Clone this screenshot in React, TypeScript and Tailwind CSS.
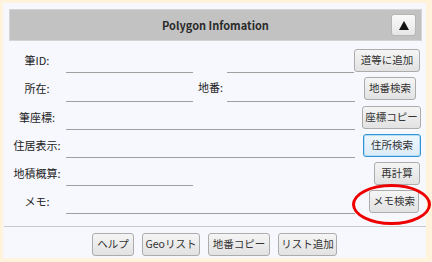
import React from "react";

const font = { fontFamily: '"Noto Sans CJK JP", "Noto Sans", sans-serif' };

function Btn({ children, w, mr = 0, focus = false }: { children: React.ReactNode; w: string; mr?: number; focus?: boolean }) {
  const base =
    "h-[23px] flex items-center justify-center rounded-[3px] text-[10.5px] leading-none text-[#333] whitespace-nowrap ";
  const look = focus
    ? "border border-[#2e94d6] bg-gradient-to-b from-[#eef6fc] to-[#dcecf9] shadow-[inset_0_0_0_1px_#b8dcf4]"
    : "border border-[#acacac] bg-gradient-to-b from-[#f5f5f5] to-[#e2e2e2]";
  return (
    <div className={base + look + " " + w} style={{ marginRight: mr }}>
      {children}
    </div>
  );
}

function Label({ children }: { children: React.ReactNode }) {
  return <div className="w-[58px] ml-[5px] text-center text-[11px] text-[#222] shrink-0">{children}</div>;
}

function Line({ w }: { w: string }) {
  return <div className={"self-end mb-[1px] h-px bg-[#9f9f9f] " + w} />;
}

export default function App() {
  return (
    <div className="w-[432px] h-[262px] bg-[#fff3dc] pl-[3px] pt-[3px] pr-[6px] pb-[4px]" style={font}>
      <div className="relative w-full h-full bg-[#f7f8fe] flex flex-col">
        {/* header */}
        <div className="mt-[6px] ml-[6px] mr-[4px] h-[32px] bg-[#c2c2c2] border border-[#d4d4d4] grid grid-cols-[1fr_auto_1fr] items-center">
          <div />
          <div className="text-[11px] font-semibold text-[#2b2b2b]">Polygon Infomation</div>
          <div className="flex justify-end pr-[5px]">
            <div className="w-[25px] h-[22px] rounded-[3px] border border-[#b5b5b5] bg-gradient-to-b from-[#fafafa] to-[#e6e6e6] flex items-center justify-center">
              <svg width="10" height="9" viewBox="0 0 10 9">
                <polygon points="5,0 10,9 0,9" fill="#111" />
              </svg>
            </div>
          </div>
        </div>

        {/* rows */}
        <div className="mt-[5px] flex flex-col">
          <div className="h-[28px] flex items-center">
            <Label>筆ID:</Label>
            <Line w="w-[127px]" />
            <div className="w-[34px]" />
            <Line w="w-[128px]" />
            <div className="ml-auto" />
            <Btn w="w-[66px]" mr={6}>道等に追加</Btn>
          </div>
          <div className="h-[29px] flex items-center">
            <Label>所在:</Label>
            <Line w="w-[127px]" />
            <div className="w-[34px] text-[11px] text-[#222] pl-[5px] mt-[-2px]">地番:</div>
            <Line w="w-[128px]" />
            <div className="ml-auto" />
            <Btn w="w-[52px]" mr={10}>地番検索</Btn>
          </div>
          <div className="h-[28px] flex items-center">
            <Label>筆座標:</Label>
            <Line w="w-[289px]" />
            <div className="ml-auto" />
            <Btn w="w-[59px]" mr={5}>座標コピー</Btn>
          </div>
          <div className="h-[28px] flex items-center">
            <Label>住居表示:</Label>
            <Line w="w-[289px]" />
            <div className="ml-auto" />
            <Btn w="w-[58px]" mr={5} focus>住所検索</Btn>
          </div>
          <div className="h-[28px] flex items-center">
            <Label>地積概算:</Label>
            <Line w="w-[127px]" />
            <div className="ml-auto" />
            <Btn w="w-[46px]" mr={6}>再計算</Btn>
          </div>
          <div className="h-[28px] flex items-center">
            <Label>メモ:</Label>
            <Line w="w-[289px]" />
            <div className="ml-auto" />
            <Btn w="w-[50px]" mr={7}>メモ検索</Btn>
          </div>
        </div>

        {/* separator */}
        <div className="mt-[11px] ml-[1px] h-px bg-[#c9c9c9]" />

        {/* bottom buttons */}
        <div className="mt-[6px] flex justify-center gap-[8px]">
          <Btn w="w-[42px]">ヘルプ</Btn>
          <Btn w="w-[58px]">Geoリスト</Btn>
          <Btn w="w-[62px]">地番コピー</Btn>
          <Btn w="w-[59px]">リスト追加</Btn>
        </div>

        {/* red annotation ellipse */}
        <div className="absolute left-[349px] top-[181px] w-[79px] h-[41px] rounded-[50%] border-[3px] border-[#ee0000]" />
      </div>
    </div>
  );
}
